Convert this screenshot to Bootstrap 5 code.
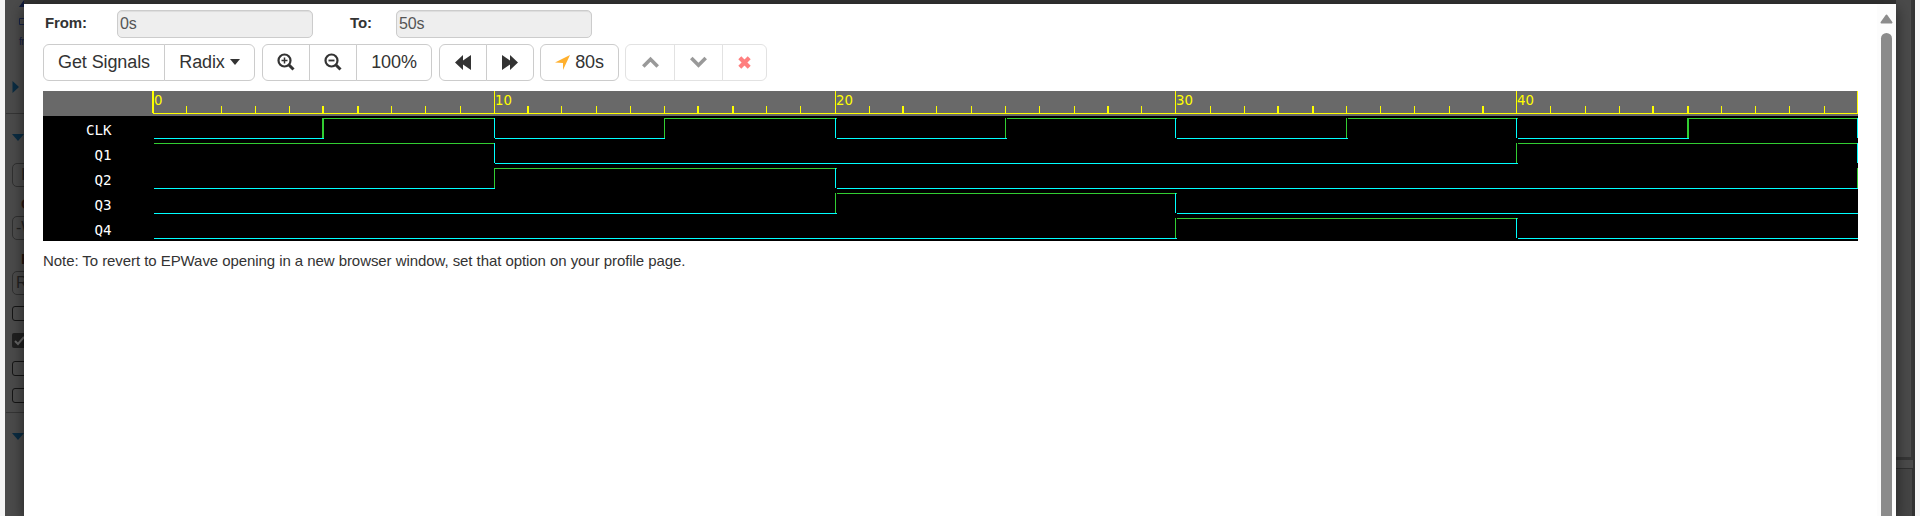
<!DOCTYPE html>
<html lang="en">
<head>
<meta charset="utf-8">
<title>EPWave</title>
<link rel="stylesheet" href="https://cdn.jsdelivr.net/npm/bootstrap@5.3.0/dist/css/bootstrap.min.css">
<style>
body{font-family:"Liberation Sans",Arial,sans-serif;color:#333;background:#f5f5f5;height:516px;overflow:hidden;font-size:15px}
.backdrop-area{margin-left:5px;width:1910px;height:516px;background:#4b4b4b}
.side-strip{width:19px;flex:none;overflow:hidden;white-space:nowrap;padding-left:7px}
.side-strip>*{flex:none}
.side-strip hr{margin:0 0 0 -6px;border:0;border-top:1px solid #353535;opacity:1;width:30px}
.field-stub{width:40px;height:24px;border:1px solid #303030;border-radius:5px;line-height:22px;padding-left:3px;color:#222;font-size:16px}
.check-stub{width:15px;height:15px;border:1px solid #151515;border-radius:3px;display:block}
.dialog-col{width:1872px;flex:none;background:#333;padding-top:4px;z-index:2}
.dialog-box{height:512px;background:#fff;box-shadow:0 4px 14px rgba(0,0,0,.55)}
.dialog-main{width:1834px;padding:6px 0 0 19px;flex:none}
.range-row label{font-weight:bold;font-size:15px;line-height:18px;letter-spacing:-.1px}
.range-row .form-control{width:196px;height:28px;background:#eee;border:1px solid #ccc;border-radius:5px;padding:0 2px;font-size:16px;color:#555;box-shadow:inset 0 1px 1px rgba(0,0,0,.075);line-height:26px;letter-spacing:-.2px}
.tool-row .btn{height:37px;border:1px solid #ccc;border-radius:6px;color:#333;background:#fff;font-size:18px;line-height:24px;padding:5px 0 6px;display:flex;align-items:center;justify-content:center;flex:none;letter-spacing:-.1px}
.tool-row .faded .btn{border-color:#e2e2e2}
.tri-down{border:5.5px solid transparent;border-top:6px solid #333;border-bottom:0;margin-left:5px}
.wave{display:block;margin-top:10px;background:#000}
.wave text{font-size:14.2px}
.wave .tick-num{font-family:"DejaVu Sans",sans-serif;font-size:13.3px}
.note-line{margin-top:11px;line-height:18px;letter-spacing:-.066px}
.track{width:19px;background:#fcfcfc}
.thumb{width:11px;height:500px;margin:9px 0 0 4px;border-radius:6px;background:#8b8b8b}
.right-top{height:460px;border-right:2px solid #363636;border-bottom:3px solid #363636;width:17px}
.right-low{height:48px;border-top:1px solid #303030;border-right:1px solid #333;background:#454545;margin-top:8px;width:17px}
</style>
</head>
<body>
<div class="backdrop-area d-flex overflow-hidden">
  <aside class="side-strip d-flex flex-column">
    <svg width="14" height="7" style="margin-left:7px"><path d="M5 0L10 7H0z" fill="#101a3c"/></svg>
    <svg width="14" height="7" style="margin:11px 0 0 7px"><path d="M.5.5h8v6h-8z" fill="none" stroke="#172348"/></svg>
    <div style="margin:10px 0 0 7px;font-size:10px;line-height:13px;letter-spacing:-.6px;color:#142042">fr</div>
    <svg width="7" height="12" style="margin-top:33px"><path d="M.5 0L7 6L.5 12z" fill="#0b2c42"/></svg>
    <hr style="margin-top:20px">
    <svg width="12" height="7" style="margin-top:20px"><path d="M0 0h12L6 7z" fill="#0b2c42"/></svg>
    <div class="field-stub" style="margin-top:22px;padding-left:8px">I</div>
    <div style="margin:8px 0 0 9px;line-height:18px;font-weight:bold;color:#2b1713">C</div>
    <div class="field-stub" style="margin-top:3px">-W</div>
    <div style="margin:10px 0 0 9px;line-height:18px;font-weight:bold;color:#24150f">R</div>
    <div class="field-stub" style="margin-top:3px">R</div>
    <span class="check-stub" style="margin-top:11px"></span>
    <svg width="15" height="15" style="margin-top:12px"><rect width="15" height="15" rx="2" fill="#202020"/><path d="M3 8L6 11L12 4" fill="none" stroke="#666" stroke-width="2"/></svg>
    <span class="check-stub" style="margin-top:13px"></span>
    <span class="check-stub" style="margin-top:12px"></span>
    <hr style="margin-top:9px">
    <svg width="12" height="7" style="margin-top:20px"><path d="M0 0h12L6 7z" fill="#0b2c42"/></svg>
  </aside>

  <main class="dialog-col">
    <div class="dialog-box d-flex justify-content-between">
      <div class="dialog-main">
        <div class="range-row d-flex">
          <label for="from" style="width:74px;padding:4px 0 0 2px">From:</label>
          <input id="from" class="form-control" value="0s" disabled>
          <label for="to" style="width:83px;padding:4px 0 0 37px">To:</label>
          <input id="to" class="form-control" value="50s" disabled>
        </div>
        <div class="tool-row d-flex" style="margin-top:6px">
          <div class="btn-group" style="margin-right:7px">
            <button class="btn" style="width:122px">Get Signals</button>
            <button class="btn" style="width:91px">Radix<span class="tri-down"></span></button>
          </div>
          <div class="btn-group" style="margin-right:7px">
            <button class="btn" style="width:48px"><svg width="18" height="18" fill="none" stroke="#333"><circle cx="7.5" cy="7.5" r="6" stroke-width="2.2"/><path d="M12 12l4.5 4.5" stroke-width="3"/><path d="M4.5 7.5h6M7.5 4.5v6" stroke-width="1.5"/></svg></button>
            <button class="btn" style="width:48px"><svg width="18" height="18" fill="none" stroke="#333"><circle cx="7.5" cy="7.5" r="6" stroke-width="2.2"/><path d="M12 12l4.5 4.5" stroke-width="3"/><path d="M4.5 7.5h6" stroke-width="1.8"/></svg></button>
            <button class="btn" style="width:76px">100%</button>
          </div>
          <div class="btn-group" style="margin-right:6px">
            <button class="btn" style="width:48px"><svg width="16" height="15" fill="#333"><path d="M0 7.5L8 0v5.5L16 0v15L8 9.5V15z"/></svg></button>
            <button class="btn" style="width:48px"><svg width="16" height="15" fill="#333"><path d="M16 7.5L8 0v5.5L0 0v15L8 9.5V15z"/></svg></button>
          </div>
          <button class="btn" style="width:79px;margin-right:6px"><svg width="15" height="15" style="margin-right:5px"><path d="M15 0L8 15V8L0 7.5z" fill="#ffb02e"/></svg>80s</button>
          <div class="btn-group faded">
            <button class="btn" style="width:50px"><svg width="17" height="12" fill="none" stroke="#999" stroke-width="3.6"><path d="M1.3 10.5l7.2-7.2 7.2 7.2"/></svg></button>
            <button class="btn" style="width:49px"><svg width="17" height="12" fill="none" stroke="#999" stroke-width="3.6"><path d="M1.3 2l7.2 7.2L15.7 2"/></svg></button>
            <button class="btn" style="width:45px"><svg width="13" height="13" fill="none" stroke="#ff7f7f" stroke-width="4.2"><path d="M1.8 1.8l9.4 9.4M11.2 1.8l-9.4 9.4"/></svg></button>
          </div>
        </div>
        <svg class="wave" id="wave" width="1815" height="150" viewBox="43 91 1815 150" shape-rendering="crispEdges">
          <rect x="43" y="91" width="1815" height="25" fill="#696969"/>
          <path id="ruler" fill="#ff0"/>
          <path id="high" fill="#32cd32"/>
          <path id="low" fill="#0ff"/>
          <g fill="#ff0" id="nums"></g>
          <g fill="#fff" font-family="DejaVu Sans Mono,monospace" text-anchor="end">
            <text x="111.500" y="135">CLK</text><text x="111.500" y="160">Q1</text><text x="111.500" y="185">Q2</text><text x="111.500" y="210">Q3</text><text x="111.500" y="235">Q4</text>
          </g>
        </svg>
        <div class="note-line">Note: To revert to EPWave opening in a new browser window, set that option on your profile page.</div>
      </div>
      <div class="track">
        <svg class="d-block" width="13" height="10" style="margin:10px 0 0 3px"><path d="M6.5 1.5L11.5 8.5H1.500z" fill="#8b8b8b" stroke="#8b8b8b" stroke-width="2" stroke-linejoin="round"/></svg>
        <div class="thumb"></div>
      </div>
    </div>
  </main>

  <div class="flex-grow-1" style="border-right:2px solid #333">
    <div class="right-top"></div>
    <div class="right-low"></div>
  </div>
</div>
<script src="https://cdn.jsdelivr.net/npm/bootstrap@5.3.0/dist/js/bootstrap.bundle.min.js"></script>
<script>
// Tick columns, one per time unit; those in `wide` are two pixels across.
const ticks=[152,186,221,255,289,322,357,391,425,460,494,527,561,596,630,664,697,732,766,800,835,869,902,936,971,1005,1039,1074,1107,1141,1175,1210,1244,1277,1312,1346,1380,1414,1449,1482,1516,1550,1585,1619,1652,1687,1721,1755,1789,1824,1857];
const wide=new Set([0,5,6,11,16,17,22,28,33,34,39,44,45]);
const box=(x,y,w,h)=>`M${x} ${y}h${w}v${h}h${-w}z`;
let ruler=box(153,113,1705,1);
ticks.forEach((x,i)=>{const y=i%10?106:91;ruler+=box(x,y,wide.has(i)?2:1,113-y);});
document.getElementById('ruler').setAttribute('d',ruler);
document.getElementById('nums').innerHTML=[0,10,20,30,40].map(n=>`<text class="tick-num" x="${ticks[n]+(n?1:2)}" y="105.4">${n}</text>`).join('');
// Each signal: starting level and the times at which it toggles.
const signals=[[0,5,10,15,20,25,30,35,40,45,50],[1,10,40,50],[0,10,20,50],[0,20,30],[0,30,40]];
let high='',low='';
signals.forEach(([start,...edges],row)=>{
  const y=118+row*25;let level=start,from=154;
  [...edges,null].forEach(t=>{
    if(from>=1858)return;
    const x=t===null?1857:ticks[t];
    const gap=t!==null&&t>=20&&t<45?1:0, end=x+1+gap+(t!==null&&wide.has(t)?1:0);
    const seg=box(from,level?y:y+20,Math.min(end,1858)-from,1);
    if(level)high+=seg;else low+=seg;
    if(t===null)return;
    const edge=box(x,y,wide.has(t)?2:1,20);
    if(level)low+=edge;else high+=edge;
    from=x+(gap?2:1);level=1-level;
  });
});
document.getElementById('high').setAttribute('d',high);
document.getElementById('low').setAttribute('d',low);
</script>
</body>
</html>
